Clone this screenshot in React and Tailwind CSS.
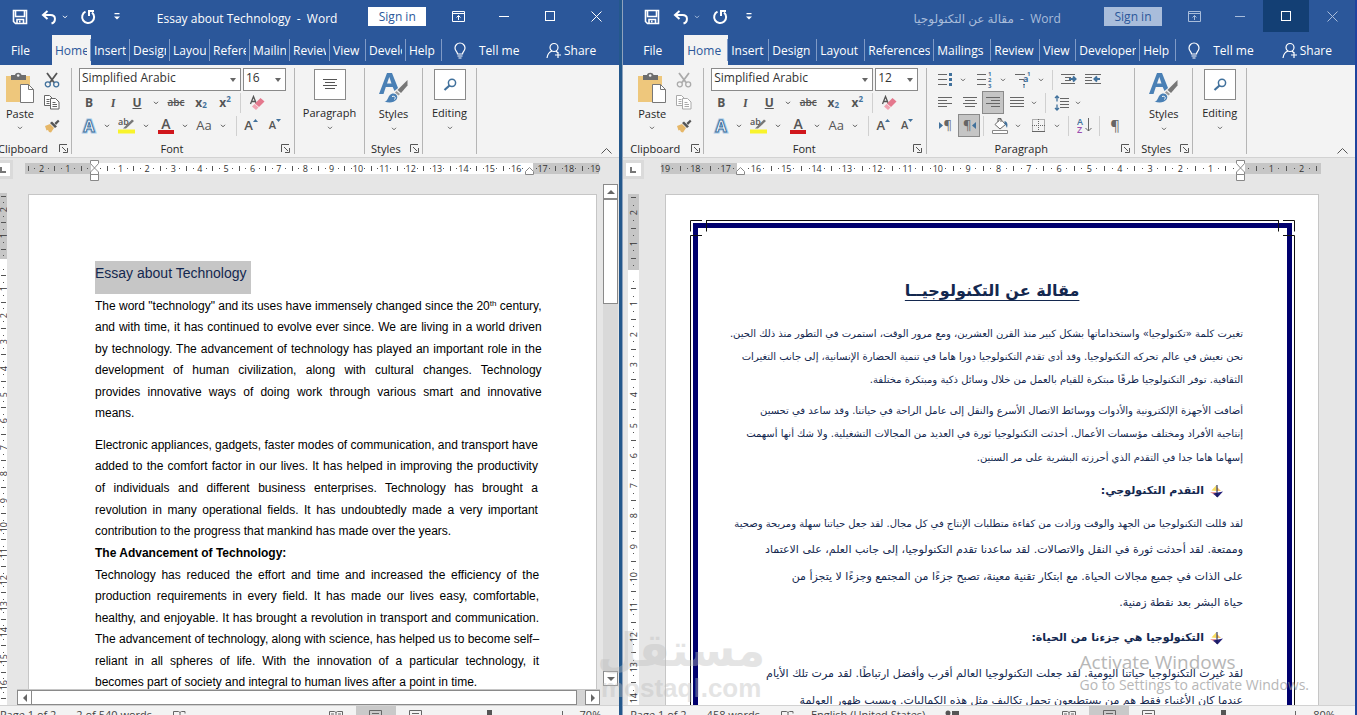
import { useState } from "react";

const LEFT_TABS = [
  { name: "Home", width: "w-[39px]" },
  { name: "Insert", width: "w-[39px]" },
  { name: "Design", width: "w-[40px]" },
  { name: "Layout", width: "w-[40px]" },
  { name: "References", width: "w-[40px]" },
  { name: "Mailings", width: "w-[40px]" },
  { name: "Review", width: "w-[40px]" },
  { name: "View", width: "w-[36px]" },
  { name: "Developer", width: "w-[40px]" },
  { name: "Help", width: "w-[36px]" },
];

const RIGHT_TABS = [
  { name: "Home", width: "w-[44px]" },
  { name: "Insert", width: "w-[41px]" },
  { name: "Design", width: "w-[48px]" },
  { name: "Layout", width: "w-[48px]" },
  { name: "References", width: "w-[69px]" },
  { name: "Mailings", width: "w-[57px]" },
  { name: "Review", width: "w-[49px]" },
  { name: "View", width: "w-[36px]" },
  { name: "Developer", width: "w-[64px]" },
  { name: "Help", width: "w-[36px]" },
];

/* ---------- small icons ---------- */

function Chevron() {
  return (
    <svg width="6" height="4" viewBox="0 0 6 4" fill="none" stroke="currentColor">
      <path d="M1 .8 3 2.800 5 .8" />
    </svg>
  );
}

function Launcher() {
  return (
    <button aria-label="More options" className="text-[#555]">
      <svg width="9" height="9" viewBox="0 0 9 9" fill="none" stroke="currentColor">
        <path d="M.5 8V.5H8M3 3l4 4M8.500 4v4.500H4" />
      </svg>
    </button>
  );
}

function SaveIcon() {
  return (
    <svg width="16" height="16" viewBox="0 0 16 16" fill="none" stroke="currentColor" strokeWidth="1.600">
      <path d="M1.500 1.500h13v13h-11l-2-2z" />
      <path d="M3.500 1.500v6h9v-6M5 14.500v-4h6.500v4" />
      <path d="M7 11.500h1.500v2H7z" fill="currentColor" stroke="none" />
    </svg>
  );
}

function UndoIcon() {
  return (
    <svg width="16" height="15" viewBox="0 0 16 15" fill="none" stroke="currentColor" strokeWidth="2">
      <path d="M6.500 1 2 5l4.500 4M2 5h7.500c6 0 5.500 7 1 8.500" />
    </svg>
  );
}

function RedoIcon() {
  return (
    <svg width="16" height="16" viewBox="0 0 16 16" fill="none" stroke="currentColor" strokeWidth="2">
      <path d="M5.500 2.600a6 6 0 1 0 6.500.8" />
      <path d="M9 7V2h5" />
    </svg>
  );
}

function PasteIcon() {
  return (
    <svg width="30" height="32" viewBox="0 0 30 32">
      <path d="M1 4h24v26H1z" fill="#eec77c" />
      <path d="M6 3h4c.5-3 6-3 6.500 0H21v5H6z" fill="#6d6d6d" />
      <circle cx="13.200" cy="3.500" r="1.300" fill="#f3f3f3" />
      <path d="M15.500 12.500h8l5 5v13h-13z" fill="#fff" stroke="#777" />
      <path d="M23.500 12.500v5h5" fill="none" stroke="#777" />
    </svg>
  );
}

function CutIcon({ dim }) {
  const blade = dim ? "#aaa" : "#555";
  const ring = dim ? "#aaa" : "#41719c";
  return (
    <svg width="16" height="16" viewBox="0 0 16 16" fill="none" strokeWidth="1.800">
      <path d="M3 1l7 9.500M13 1 6 10.500" stroke={blade} />
      <circle cx="3.800" cy="12.300" r="2.500" stroke={ring} strokeWidth="1.300" />
      <circle cx="12.200" cy="12.300" r="2.500" stroke={ring} strokeWidth="1.300" />
    </svg>
  );
}

function CopyIcon({ dim }) {
  const color = dim ? "#aaa" : "#666";
  return (
    <svg width="16" height="15" viewBox="0 0 16 15" stroke={color}>
      <path d="M.5.500h5l3 3v7h-8z" fill="#fff" />
      <path d="M2.500 4.500h3M2.500 6.500h3M2.500 8.500h3" />
      <path d="M6.500 3.500h5l3.500 3.500v7H6.500z" fill="#fff" />
      <path d="M8.500 7.500h3M8.500 9.500h4.500M8.500 11.500h4.500" />
    </svg>
  );
}

function BrushIcon() {
  return (
    <svg width="16" height="14" viewBox="0 0 16 14">
      <path d="M1 7l5-2 4 4-3 4.500-2-.5-1-2-1.500.5z" fill="#e6b768" />
      <path d="M6 4l2-1.500 5 5L11 9z" fill="#555" />
      <path d="M10.500 4 14 .8l1.500 1.500L12 6z" fill="#555" />
    </svg>
  );
}

function EraserIcon() {
  return (
    <svg width="16" height="16" viewBox="0 0 16 16">
      <path d="M1.500 9 4.500 1.500 7.500 9M2.500 6.500h4" stroke="#555" strokeWidth="1.300" fill="none" />
      <path d="M6 8.500 11.500 3 15.500 6.500 10 12z" fill="#e4788d" />
      <path d="M3 11.500 5.500 9 9.500 12.500 7 15z" fill="#f2a3b2" />
    </svg>
  );
}

function TextEffectsIcon() {
  return (
    <svg width="18" height="18" viewBox="0 0 18 18" fontFamily="Open Sans" fontSize="16" fontWeight="700" textAnchor="middle">
      <text x="9" y="15" fill="#9cc3e6" stroke="#a9cbe9" strokeWidth="3">A</text>
      <text x="9" y="15" fill="#fff" stroke="#41719c" strokeWidth="1">A</text>
    </svg>
  );
}

function HighlightIcon() {
  return (
    <svg width="17" height="17" viewBox="0 0 17 17">
      <text x="0" y="8" fontSize="9" fontFamily="Open Sans" fontWeight="600" fill="#555">ab</text>
      <path d="M5 11.500 14 2.500l2 1.500-8 7.500z" fill="#777" />
      <path d="M0 12.500h17v4H0z" fill="#f8f32b" />
    </svg>
  );
}

function StylesIcon() {
  return (
    <svg width="30" height="31" viewBox="0 0 30 31">
      <path d="M0 22 8 1h5l6 15-3.500 3-1.800-4H6.800L4.500 22zM8 11.500h4.500L10.300 5z" fill="#4a80b5" fillRule="evenodd" />
      <path d="M28.500 8v5.500L22 21l-3.500-3z" fill="#777" />
      <path d="M17.500 19l3.500 3-1.500 1.500-3.500-3z" fill="#999" />
      <path d="M5.500 29.500c4 0 3-7 8-8 4-.5 6 3 4 6-2.500 3.500-8 3.500-12 2z" fill="#4a80b5" />
      <path d="M13 24.500c3-1 4 1 2.500 3" stroke="#fff" fill="none" />
    </svg>
  );
}

function LinesIcon({ lines, className }) {
  return (
    <svg width="16" height="13" viewBox="0 0 16 13" stroke="currentColor" className={className}>
      {lines.map(([x1, x2], i) => (
        <path key={i} d={`M${x1} ${i * 3 + 1.5}H${x2}`} />
      ))}
    </svg>
  );
}

function ListIcon({ kind }) {
  return (
    <svg width="17" height="17" viewBox="0 0 17 17">
      {kind === "multi" ? (
        <path d="M1 3.500h10M5 8.500h5M9 13.500h2" stroke="#666" />
      ) : (
        <path d="M1 3.500h9M1 8.500h9M1 13.500h9" stroke="#666" />
      )}
      {kind === "bullet" && <path d="M12 2h3v3h-3zM12 7h3v3h-3zM12 12h3v3h-3z" fill="#41719c" />}
      {kind === "number" && (
        <g fontSize="6" fontFamily="Open Sans" fontWeight="700" fill="#41719c">
          <text x="12" y="5">1</text>
          <text x="12" y="11">2</text>
          <text x="12" y="17">3</text>
        </g>
      )}
      {kind === "multi" && (
        <g fontSize="9" fontFamily="Open Sans" fontWeight="700" fill="#41719c">
          <text x="13" y="5" fontSize="6">1</text>
          <text x="9" y="11">a</text>
          <text x="9" y="17" fontSize="6">i</text>
        </g>
      )}
    </svg>
  );
}

function IndentIcon({ out }) {
  return (
    <svg width="17" height="13" viewBox="0 0 17 13" fill="none">
      <path d={out ? "M1 1.500h16M1 4.500h7M1 7.500h7M1 10.500h16" : "M1 1.500h14M5 4.500h6M5 7.500h6M1 10.500h14"} stroke="#666" />
      <path d={out ? "M16 6h-5M13 3.500 10.500 6 13 8.500" : "M9 6h6M13 3.500 15.500 6 13 8.500"} stroke="#41719c" strokeWidth="2" />
    </svg>
  );
}

function SpacingIcon() {
  return (
    <svg width="15" height="16" viewBox="0 0 15 16" fill="none">
      <path d="M6 3.500h9M6 6.500h9M6 9.500h9M6 12.500h9" stroke="#666" />
      <path d="M3 1v5.500M1 3l2-2 2 2M3 9.500V15M1 13l2 2 2-2" stroke="#41719c" strokeWidth="1.300" />
    </svg>
  );
}

function BucketIcon() {
  return (
    <svg width="17" height="17" viewBox="0 0 17 17">
      <path d="M3 7.500 8.500 2l5 5.500L8 12z" fill="#fff" stroke="#666" />
      <path d="M6 5V1.500h3V5" fill="none" stroke="#666" />
      <path d="M12.500 4c4 1 3 5 2.500 7-1-2-1-3-2.500-4z" fill="#41719c" />
      <path d="M.5 13.500h15v3H.5z" fill="#fff" stroke="#888" />
    </svg>
  );
}

function BordersIcon() {
  return (
    <svg width="13" height="13" viewBox="0 0 13 13" fill="none" stroke="#666" strokeDasharray="1 1">
      <path d="M.5.500h12v12H.5zM6.500 0v13M0 6.500h13" />
      <path d="M0 12.500h13" strokeDasharray="none" />
    </svg>
  );
}

function SortIcon() {
  return (
    <svg width="15" height="17" viewBox="0 0 15 17">
      <text x="0" y="8" fontSize="9" fontFamily="Open Sans" fontWeight="600" fill="#41719c">A</text>
      <text x="0" y="16" fontSize="9" fontFamily="Open Sans" fontWeight="600" fill="#9b4fb0">Z</text>
      <path d="M11.500 1v13M8.500 11l3 3 3-3" fill="none" stroke="#666" />
    </svg>
  );
}

function BulbIcon() {
  return (
    <svg width="12" height="17" viewBox="0 0 12 17" fill="none" stroke="currentColor" strokeWidth="1.200">
      <path d="M3.500 12c0-2.500-2.500-3-2.500-6a5 5 0 0 1 10 0c0 3-2.500 3.500-2.500 6zM3.500 14h5M4.500 16h3" />
    </svg>
  );
}

function PersonIcon() {
  return (
    <svg width="16" height="17" viewBox="0 0 16 17" fill="none" stroke="currentColor" strokeWidth="1.200">
      <circle cx="8" cy="5.500" r="4" />
      <path d="M1 16c.5-4 2-6 5-7M10 9l1.500 1.500M9 13h6M12 10v6" />
    </svg>
  );
}

/* ---------- title bar and tabs ---------- */

function TitleBar({ title, titleClass, barClass, inactive }) {
  const dim = inactive ? "text-[#a9bddb]" : "text-white";
  return (
    <header className="flex h-[35px] shrink-0 items-start">
      <div className={`flex h-[34px] items-center text-white ${barClass}`}>
        <button aria-label="Save" className="flex w-[24px] justify-center"><SaveIcon /></button>
        <button aria-label="Undo" className="ml-[4px] flex w-[26px] justify-center"><UndoIcon /></button>
        <button aria-label="Undo list" className={dim}><Chevron /></button>
        <button aria-label="Repeat" className="ml-[10px] flex w-[20px] justify-center"><RedoIcon /></button>
        <button aria-label="Customize Quick Access Toolbar" className="ml-[16px]">
          <svg width="6" height="8" viewBox="0 0 6 8" fill="currentColor">
            <path d="M.5 0h5v1.200h-5zM0 3.500h6l-3 3z" />
          </svg>
        </button>
      </div>
      <h1 className={`min-w-0 flex-1 truncate text-center text-[12px] leading-[38px] ${titleClass} ${dim}`}>{title}</h1>
      <button className={`mt-[7px] h-[19px] w-[58px] text-[12px] leading-[18px] ${inactive ? "bg-[#a9bddb] text-[#2b579a]" : "bg-white text-[#2b579a]"}`}>
        Sign in
      </button>
      <button aria-label="Ribbon display options" className={`ml-[9px] flex h-[32px] w-[46px] items-center justify-center ${dim}`}>
        <svg width="13" height="11" viewBox="0 0 13 11" fill="none" stroke="currentColor">
          <path d="M.5.500h12v10H.5zM.5 2.500h12M6.500 9V4.500M4.500 6.500l2-2 2 2" />
        </svg>
      </button>
      <button aria-label="Minimize" className={`flex h-[32px] w-[46px] items-center justify-center ${dim}`}>
        <span className="h-px w-[10px] bg-current" />
      </button>
      <button aria-label="Maximize" className={`flex h-[32px] w-[46px] items-center justify-center text-white ${inactive ? "bg-[#133f74]" : ""}`}>
        <span className="size-[10px] border border-current" />
      </button>
      <button aria-label="Close" className={`flex h-[32px] w-[46px] items-center justify-center ${dim}`}>
        <svg width="11" height="11" viewBox="0 0 11 11" stroke="currentColor">
          <path d="M.5.500l10 10M10.500.500l-10 10" />
        </svg>
      </button>
    </header>
  );
}

function TabStrip({ tabs, fileClass }) {
  const [active, setActive] = useState("Home");
  return (
    <nav className="flex h-[30px] shrink-0 text-[12px] leading-[29px] text-white">
      <button className={`shrink-0 text-left ${fileClass}`}>File</button>
      {tabs.map((tab) => (
        <button
          key={tab.name}
          onClick={() => setActive(tab.name)}
          className={`flex shrink-0 items-center ${tab.width} ${active === tab.name ? "bg-[#f3f3f3] text-[#2b579a]" : ""}`}
        >
          <span className="mx-[3px] min-w-0 flex-1 overflow-hidden text-left whitespace-nowrap">{tab.name}</span>
          <span className="h-[22px] w-px bg-[#7f9ac6]" />
        </button>
      ))}
      <button className="ml-[12px] flex shrink-0 items-center">
        <BulbIcon />
        <span className="ml-[13px]">Tell me</span>
      </button>
      <button className="mr-[23px] ml-auto flex shrink-0 items-center gap-[2px]">
        <PersonIcon />
        <span>Share</span>
      </button>
    </nav>
  );
}

/* ---------- ribbon ---------- */

function Tool({ label, className, selected, children }) {
  return (
    <button
      aria-label={label}
      className={`flex h-[23px] shrink-0 items-center justify-center ${className} ${selected ? "border border-[#8a8a8a] bg-[#c5c5c5]" : ""}`}
    >
      {children}
    </button>
  );
}

function Divider({ className }) {
  return <span className={`h-[20px] w-px shrink-0 bg-[#d0d0d0] ${className}`} />;
}

function GroupLabel({ children, className }) {
  return (
    <div className="mt-auto flex h-[11px] items-center pr-[4px] text-[11px] leading-[11px] text-[#262626]">
      <span className={`flex-1 text-center whitespace-nowrap ${className}`}>{children}</span>
      <Launcher />
    </div>
  );
}

function Group({ className, children }) {
  return <section className={`flex h-[86px] shrink-0 flex-col border-r border-[#b5b5b5] ${className}`}>{children}</section>;
}

function ClipboardGroup({ className, dim }) {
  return (
    <Group className={className}>
      <div className="flex justify-end">
        <button className="mt-[4px] flex w-[40px] flex-col items-center text-[11px]">
          <PasteIcon />
          <span className="mt-[2px] leading-[16px]">Paste</span>
          <span className="mt-[4px] text-[#666]"><Chevron /></span>
        </button>
        <div className="mr-[7px] flex w-[24px] flex-col">
          <Tool label="Cut" className="w-full"><CutIcon dim={dim} /></Tool>
          <Tool label="Copy" className="w-full"><CopyIcon dim={dim} /></Tool>
          <Tool label="Format painter" className="w-full"><BrushIcon /></Tool>
        </div>
      </div>
      <div className="mt-auto flex h-[11px] items-center justify-end gap-[11px] pr-[3px] text-[11px] leading-[11px]">
        <span>Clipboard</span>
        <Launcher />
      </div>
    </Group>
  );
}

function Combo({ label, value, options, className }) {
  return (
    <label className={`relative block h-[23px] border border-[#8a8a8a] bg-white ${className}`}>
      <select aria-label={label} defaultValue={value} className="block h-[18px] w-full appearance-none pl-[2px] text-[12px] leading-[18px] text-[#333] outline-none">
        {options.map((option) => (
          <option key={option}>{option}</option>
        ))}
      </select>
      <svg width="6" height="4" viewBox="0 0 6 4" className="pointer-events-none absolute top-[9px] right-[4px]" fill="#666">
        <path d="M0 0h6L3 4z" />
      </svg>
    </label>
  );
}

function FontGroup({ size }) {
  return (
    <Group className="w-[223px] pl-[5px] text-[#555]">
      <div className="ml-[2px] flex gap-[2px]">
        <Combo label="Font" value="Simplified Arabic" options={["Simplified Arabic", "Arial"]} className="w-[162px]" />
        <Combo label="Font size" value={size} options={["12", "16"]} className="w-[43px]" />
      </div>
      <div className="flex items-center text-[12px]">
        <Tool label="Bold" className="w-[24px] font-bold">B</Tool>
        <Tool label="Italic" className="w-[24px] font-serif font-bold italic">I</Tool>
        <Tool label="Underline" className="w-[24px] font-bold underline">U</Tool>
        <Tool label="Underline style" className="w-[14px]"><Chevron /></Tool>
        <Tool label="Strikethrough" className="w-[26px] text-[10px] font-semibold line-through">abc</Tool>
        <Tool label="Subscript" className="w-[24px] font-bold">x<sub className="text-[8px] text-[#41719c]">2</sub></Tool>
        <Tool label="Superscript" className="w-[24px] font-bold">x<sup className="text-[8px] text-[#41719c]">2</sup></Tool>
        <Divider className="mx-[3px]" />
        <Tool label="Clear formatting" className="w-[26px]"><EraserIcon /></Tool>
      </div>
      <div className="flex items-center text-[13px]">
        <Tool label="Text effects" className="w-[24px]"><TextEffectsIcon /></Tool>
        <Tool label="Effects list" className="w-[11px]"><Chevron /></Tool>
        <Tool label="Highlight" className="w-[28px]"><HighlightIcon /></Tool>
        <Tool label="Highlight colors" className="w-[12px]"><Chevron /></Tool>
        <Tool label="Font color" className="w-[28px]">
          <span className="flex w-[16px] flex-col items-center border-b-4 border-[#d0161c] text-[14px] leading-[13px] font-semibold">A</span>
        </Tool>
        <Tool label="Font colors" className="w-[10px]"><Chevron /></Tool>
        <Tool label="Change case" className="w-[28px]">Aa</Tool>
        <Tool label="Case list" className="w-[10px]"><Chevron /></Tool>
        <Divider className="mr-[2px] ml-[8px]" />
        <Tool label="Grow font" className="w-[24px] font-semibold">
          A<svg width="5" height="3" viewBox="0 0 5 3" className="mb-[10px]" fill="#41719c"><path d="M0 3h5L2.500 0z" /></svg>
        </Tool>
        <Tool label="Shrink font" className="w-[24px] text-[11px] font-semibold">
          A<svg width="5" height="3" viewBox="0 0 5 3" className="mb-[10px]" fill="#41719c"><path d="M0 0h5L2.500 3z" /></svg>
        </Tool>
      </div>
      <GroupLabel className="mr-[14px]">Font</GroupLabel>
    </Group>
  );
}

function CollapsedGroup({ name, className, children }) {
  return (
    <Group className={className}>
      <button className="mt-[1px] flex flex-col items-center text-[11px]">
        <span className="flex h-[31px] w-[32px] items-center justify-center border border-[#8a8a8a] bg-white text-[#555]">{children}</span>
        <span className="mt-[4px] leading-[18px]">{name}</span>
        <span className="mt-[4px] text-[#666]"><Chevron /></span>
      </button>
    </Group>
  );
}

function EditingGroup() {
  return (
    <CollapsedGroup name="Editing" className="w-[54px]">
      <svg width="14" height="13" viewBox="0 0 14 13" fill="none" stroke="#41719c">
        <circle cx="9" cy="4.800" r="3.600" strokeWidth="1.500" />
        <path d="M6.500 7.500 1.500 12" strokeWidth="2.200" />
      </svg>
    </CollapsedGroup>
  );
}

function StylesGroup() {
  return (
    <Group className="w-[58px]">
      <button className="mt-[4px] flex flex-col items-center text-[11px]">
        <StylesIcon />
        <span className="mt-[3px] leading-[16px]">Styles</span>
        <span className="mt-[5px] text-[#666]"><Chevron /></span>
      </button>
      <div className="mt-auto flex h-[11px] items-center justify-between pr-[3px] pl-[6px] text-[11px] leading-[11px]">
        <span>Styles</span>
        <Launcher />
      </div>
    </Group>
  );
}

const FULL = [[1, 15], [1, 15], [1, 15], [1, 15]];

function ParagraphGroup() {
  return (
    <Group className="w-[208px] pl-[6px] text-[#666]">
      <div className="flex h-[23px] items-center">
        <Tool label="Bullets" className="w-[24px]"><ListIcon kind="bullet" /></Tool>
        <Tool label="Bullet styles" className="w-[12px]"><Chevron /></Tool>
        <Tool label="Numbering" className="w-[30px]"><ListIcon kind="number" /></Tool>
        <Tool label="Number styles" className="w-[8px]"><Chevron /></Tool>
        <Tool label="Multilevel list" className="w-[30px]"><ListIcon kind="multi" /></Tool>
        <Tool label="List styles" className="w-[8px]"><Chevron /></Tool>
        <Divider className="mr-[3px] ml-[7px]" />
        <Tool label="Increase indent" className="w-[24px]"><IndentIcon /></Tool>
        <Tool label="Decrease indent" className="w-[24px]"><IndentIcon out /></Tool>
      </div>
      <div className="flex items-center">
        <Tool label="Align left" className="w-[24px]"><LinesIcon lines={[[1, 15], [1, 10], [1, 15], [1, 10]]} /></Tool>
        <Tool label="Center" className="w-[25px]"><LinesIcon lines={[[1, 15], [3, 13], [1, 15], [3, 13]]} /></Tool>
        <Tool label="Align right" className="w-[22px]" selected><LinesIcon lines={[[1, 15], [6, 15], [1, 15], [6, 15]]} /></Tool>
        <Tool label="Justify" className="w-[26px]"><LinesIcon lines={FULL} /></Tool>
        <Tool label="Justify list" className="w-[8px]"><Chevron /></Tool>
        <Divider className="mr-[3px] ml-[7px]" />
        <Tool label="Line spacing" className="w-[24px]"><SpacingIcon /></Tool>
        <Tool label="Spacing list" className="w-[9px]"><Chevron /></Tool>
      </div>
      <div className="flex items-center text-[15px]">
        <Tool label="Left to right" className="w-[25px] text-[13px]">
          <svg width="4" height="7" viewBox="0 0 4 7" fill="#41719c"><path d="M0 0v7l4-3.500z" /></svg>¶
        </Tool>
        <Tool label="Right to left" className="w-[22px] text-[13px]" selected>
          ¶<svg width="4" height="7" viewBox="0 0 4 7" fill="#41719c"><path d="M4 0v7L0 3.500z" /></svg>
        </Tool>
        <Divider className="mr-[3px] ml-[3px]" />
        <Tool label="Shading" className="w-[26px]"><BucketIcon /></Tool>
        <Tool label="Shading colors" className="w-[9px]"><Chevron /></Tool>
        <Tool label="Borders" className="w-[32px]"><BordersIcon /></Tool>
        <Tool label="Border styles" className="w-[6px]"><Chevron /></Tool>
        <Divider className="mr-[3px] ml-[8px]" />
        <Tool label="Sort" className="w-[24px]"><SortIcon /></Tool>
        <Divider className="mr-[3px] ml-[3px]" />
        <Tool label="Show marks" className="w-[24px]">¶</Tool>
      </div>
      <GroupLabel className="mr-[12px]">Paragraph</GroupLabel>
    </Group>
  );
}

function Ribbon({ children }) {
  return (
    <div className="flex h-[93px] shrink-0 overflow-hidden border-b border-[#d2d2d2] bg-[#f3f3f3] pt-[3px] text-[#262626]">
      {children}
      <button aria-label="Collapse the ribbon" className="mt-auto mr-[7px] mb-[3px] ml-auto">
        <svg width="11" height="6" viewBox="0 0 11 6" fill="none" stroke="#555"><path d="M.5 5.500l5-5 5 5" /></svg>
      </button>
    </div>
  );
}

/* ---------- rulers ---------- */

// One mark per quarter of a centimetre, from -2.5 up to the given end.
function rulerMarks(end) {
  const marks = [];
  for (let q = -10; q <= end * 4; q++) marks.push(q);
  return marks;
}

function markColor(q, limit) {
  return q < 0 || q > limit * 4 ? "bg-[#c6c6c6]" : "bg-white";
}

function MarkFace({ q, vertical }) {
  if (q === 0) return null;
  if (q % 4 === 0) return <span className={`relative z-10 ${vertical ? "rotate-180 [writing-mode:vertical-rl]" : ""}`}>{Math.abs(q) / 4}</span>;
  if (q % 2 === 0) return <span className={vertical ? "h-px w-[5px] bg-[#555]" : "h-[5px] w-px bg-[#555]"} />;
  return <span className="size-px bg-[#555]" />;
}

function Ruler({ reversed, className }) {
  const marks = rulerMarks(19);
  if (reversed) marks.reverse();
  return (
    <div className={`flex h-[11px] flex-1 text-[9px] leading-[11px] text-[#333] ${className}`}>
      {marks.map((q) => (
        <span key={q} className={`relative flex min-w-0 flex-1 items-center justify-center ${markColor(q, 16.5)}`}>
          {q !== 66 && <MarkFace q={q} />}
          {q === 0 && (
            <svg width="9" height="22" viewBox="0 0 9 22" className="absolute -top-[3px] z-10" fill="#fff" stroke="#888">
              <path d="M.5.500h8v3L4.500 8 .5 3.500zM.5 14.500v-2.500l4-4 4 4v2.500zM.5 14.500h8v6h-8z" />
            </svg>
          )}
          {q === 66 && (
            <svg width="9" height="8" viewBox="0 0 9 8" className="absolute top-[4px] z-10" fill="#fff" stroke="#888">
              <path d="M.5 7.500V4.500l4-4 4 4v3z" />
            </svg>
          )}
        </span>
      ))}
    </div>
  );
}

function VerticalRuler({ end, className }) {
  return (
    <div className={`shrink-0 overflow-hidden text-[9px] leading-[11px] text-[#333] ${className}`}>
      <div className="flex h-[515px] flex-col">
        {rulerMarks(end).map((q) => (
          <span key={q} className={`flex min-h-0 flex-1 items-center justify-center ${markColor(q, 99)}`}>
            <MarkFace q={q} vertical />
          </span>
        ))}
      </div>
    </div>
  );
}

function TabSelector({ className }) {
  return (
    <button aria-label="Tab selector" className={`flex h-[19px] shrink-0 items-center border-[#dadada] bg-white text-[#777] ${className}`}>
      <svg width="6" height="6" viewBox="0 0 6 6" fill="none" stroke="currentColor" strokeWidth="2"><path d="M1 0v5h5" /></svg>
    </button>
  );
}

/* ---------- documents ---------- */

// Every line keeps its own break; all but the last one are spread to the full measure.
function EnglishParagraph({ lines, className }) {
  return (
    <p className={`grid auto-rows-fr items-center text-[12px] ${className}`}>
      {lines.map((line, i) => (
        <span key={i} className={`block leading-[20px] whitespace-nowrap ${i < lines.length - 1 ? "[text-align-last:justify]" : ""}`}>{line}</span>
      ))}
    </p>
  );
}

function EnglishPage() {
  return (
    <article className="mt-[10px] mr-[3px] ml-[21px] min-h-0 flex-1 overflow-hidden border border-b-0 border-[#c6c6c6] bg-white px-[66px] pt-[66px] font-['Liberation_Sans',Arial,sans-serif] text-black">
      <h2 className="h-[33px] w-[156px] bg-[#c6c6c6] text-[14px] leading-[25px] whitespace-nowrap text-[#14284f]">Essay about Technology</h2>
      <EnglishParagraph
        className="mt-[1px] h-[129px]"
        lines={[
          <>The word "technology" and its uses have immensely changed since the 20<sup className="text-[8px]">th</sup> century,</>,
          "and with time, it has continued to evolve ever since. We are living in a world driven",
          "by technology. The advancement of technology has played an important role in the",
          "development of human civilization, along with cultural changes. Technology",
          "provides innovative ways of doing work through various smart and innovative",
          "means.",
        ]}
      />
      <EnglishParagraph
        className="mt-[10px] h-[108px]"
        lines={[
          "Electronic appliances, gadgets, faster modes of communication, and transport have",
          "added to the comfort factor in our lives. It has helped in improving the productivity",
          "of individuals and different business enterprises. Technology has brought a",
          "revolution in many operational fields. It has undoubtedly made a very important",
          "contribution to the progress that mankind has made over the years.",
        ]}
      />
      <h3 className="text-[12px] leading-[22px] font-bold">The Advancement of Technology:</h3>
      <EnglishParagraph
        className="h-[129px]"
        lines={[
          "Technology has reduced the effort and time and increased the efficiency of the",
          "production requirements in every field. It has made our lives easy, comfortable,",
          "healthy, and enjoyable. It has brought a revolution in transport and communication.",
          "The advancement of technology, along with science, has helped us to become self–",
          "reliant in all spheres of life. With the innovation of a particular technology, it",
          "becomes part of society and integral to human lives after a point in time.",
        ]}
      />
    </article>
  );
}

function ArabicParagraph({ lines, className }) {
  return (
    <p className={`grid auto-rows-fr items-center ${className}`}>
      {lines.map((line, i) => (
        <span key={i} className="block leading-[20px] whitespace-nowrap">{line}</span>
      ))}
    </p>
  );
}

function ArabicHeading({ children, className }) {
  return (
    <h3 className={`flex h-[24px] items-center gap-[6px] pr-[20px] text-[11px] font-bold ${className}`}>
      <svg width="13" height="13" viewBox="0 0 13 13">
        <path d="M1.500 5.500 6.500 0v6z" fill="#f9dc5c" />
        <path d="M0 7h6v4z" fill="#ea9a9a" />
        <path d="M7 2l4 4H7z" fill="#f6c36b" />
        <path d="M3 8.500 13 6.500 7.500 12.500z" fill="#24207a" />
        <path d="M7 0v12" stroke="#111a4a" />
      </svg>
      {children}
    </h3>
  );
}

function FrameCorner({ className }) {
  return (
    <svg width="17" height="17" viewBox="0 0 17 17" fill="none" stroke="#111" className={`absolute top-0 ${className}`}>
      <path d="M.5 11.500V.500H12M.5 17v-1.500H12M16.500 11.500V.500" />
    </svg>
  );
}

function ArabicPage() {
  return (
    <article className="mt-[10px] mr-[36px] ml-[26px] min-h-0 flex-1 overflow-hidden border border-b-0 border-[#c6c6c6] bg-white pt-[25px] pr-[23px] pl-[24px]">
      <div className="relative px-[3px] pt-[3px]">
        <FrameCorner className="left-0" />
        <FrameCorner className="right-0 -scale-x-100" />
        <span className="absolute inset-x-[16px] top-0 h-px bg-[#111]" />
        <span className="absolute top-[16px] bottom-0 left-0 w-px bg-[#111]" />
        <span className="absolute top-[16px] right-0 bottom-0 w-px bg-[#111]" />
        <div dir="rtl" className="h-[600px] border-x-[5px] border-t-[5px] border-[#00006e] pt-[47px] pr-[44px] font-['DejaVu_Sans',sans-serif] text-[#14284f]">
          <h2 className="ml-[43px] text-center text-[16px] leading-[32px] font-bold whitespace-nowrap underline underline-offset-4">مقالة عن التكنولوجيــا</h2>
          <ArabicParagraph
            className="mt-[15px] h-[70px] text-[10px]"
            lines={[
              "تغيرت كلمة «تكنولوجيا» واستخداماتها بشكل كبير منذ القرن العشرين، ومع مرور الوقت، استمرت في التطور منذ ذلك الحين.",
              "نحن نعيش في عالم تحركه التكنولوجيا. وقد أدى تقدم التكنولوجيا دورا هاما في تنمية الحضارة الإنسانية، إلى جانب التغيرات",
              "الثقافية. توفر التكنولوجيا طرقًا مبتكرة للقيام بالعمل من خلال وسائل ذكية ومبتكرة مختلفة.",
            ]}
          />
          <ArabicParagraph
            className="mt-[7px] h-[71px] text-[10px]"
            lines={[
              "أضافت الأجهزة الإلكترونية والأدوات ووسائط الاتصال الأسرع والنقل إلى عامل الراحة في حياتنا. وقد ساعد في تحسين",
              "إنتاجية الأفراد ومختلف مؤسسات الأعمال. أحدثت التكنولوجيا ثورة في العديد من المجالات التشغيلية. ولا شك أنها أسهمت",
              "إسهاما هاما جدا في التقدم الذي أحرزته البشرية على مر السنين.",
            ]}
          />
          <ArabicHeading className="mt-[9px]">التقدم التكنولوجي:</ArabicHeading>
          <ArabicParagraph
            className="mt-[8px] h-[105px] text-[11px]"
            lines={[
              <span className="text-[10px]">لقد قللت التكنولوجيا من الجهد والوقت وزادت من كفاءة متطلبات الإنتاج في كل مجال. لقد جعل حياتنا سهلة ومريحة وصحية</span>,
              "وممتعة. لقد أحدثت ثورة في النقل والاتصالات. لقد ساعدنا تقدم التكنولوجيا، إلى جانب العلم، على الاعتماد",
              "على الذات في جميع مجالات الحياة. مع ابتكار تقنية معينة، تصبح جزءًا من المجتمع وجزءًا لا يتجزأ من",
              "حياة البشر بعد نقطة زمنية.",
            ]}
          />
          <ArabicHeading className="mt-[10px]">التكنولوجيا هي جزءنا من الحياة:</ArabicHeading>
          <ArabicParagraph
            className="mt-[10px] h-[54px] text-[11px]"
            lines={[
              "لقد غيرت التكنولوجيا حياتنا اليومية. لقد جعلت التكنولوجيا العالم أقرب وأفضل ارتباطًا. لقد مرت تلك الأيام",
              "عندما كان الأغنياء فقط هم من يستطيعون تحمل تكاليف مثل هذه الكماليات. وبسبب ظهور العولمة",
            ]}
          />
        </div>
      </div>
    </article>
  );
}

/* ---------- scroll bars and status bar ---------- */

function ScrollButton({ label, path }) {
  return (
    <button aria-label={label} className="flex size-[15px] shrink-0 items-center justify-center border border-[#8a8a8a] bg-white">
      <svg width="8" height="8" viewBox="0 0 8 8" fill="#666"><path d={path} /></svg>
    </button>
  );
}

function BookIcon() {
  return (
    <svg width="14" height="12" viewBox="0 0 14 12" fill="none" stroke="#666">
      <path d="M.5 1.500h5l1.500 1 1.500-1h5v9H.5zM7 2.500v8M2 4h3M2 6h3M9 4h3M9 6h3" />
    </svg>
  );
}

function ProofIcon() {
  return (
    <svg width="14" height="12" viewBox="0 0 14 12" fill="none" stroke="#666">
      <path d="M7 2.500v8l-1.500-1h-5v-8h5zM7 2.500l1.500-1h3.500v2M8.500 5l5 5M13.500 5l-5 5" />
    </svg>
  );
}

function PageIcon() {
  return (
    <svg width="13" height="12" viewBox="0 0 13 12" fill="none" stroke="#666">
      <path d="M.5.500h12v11H.5zM3 3.500h7M3 5.500h7M3 7.500h7" />
    </svg>
  );
}

function StatusBar({ page, words, language, zoom, pageClass, wordsClass, viewsClass }) {
  return (
    <footer className="h-[10px] shrink-0 overflow-hidden border-t border-[#d2d2d2] bg-[#f3f3f3] text-[11px] text-[#444]">
      <div className="flex h-[19px] items-center whitespace-nowrap">
        <span className={pageClass}>{page}</span>
        <span className={wordsClass}>{words}</span>
        <span className="ml-[21px]"><ProofIcon /></span>
        {language && <span className="ml-[16px]">{language}</span>}
        {language && (
          <svg width="14" height="12" viewBox="0 0 14 12" className="ml-[20px]" fill="#555">
            <circle cx="3" cy="3" r="2.500" /><path d="M7 1h7v4H7zM1 7h8v4H1z" />
          </svg>
        )}
        <div className={`ml-auto flex h-full items-center ${viewsClass}`}>
          <button aria-label="Read mode"><BookIcon /></button>
          <button aria-label="Print layout" className="ml-[13px] flex h-full w-[40px] items-center justify-center bg-[#c9c9c9]"><PageIcon /></button>
          <button aria-label="Web layout" className="ml-[13px]"><PageIcon /></button>
          <input
            type="range"
            aria-label="Zoom"
            defaultValue="41"
            className="ml-[24px] h-[11px] w-[106px] appearance-none bg-[linear-gradient(#aaa,#aaa)] bg-[length:100%_1px] bg-center bg-no-repeat [&::-webkit-slider-thumb]:h-[11px] [&::-webkit-slider-thumb]:w-[5px] [&::-webkit-slider-thumb]:appearance-none [&::-webkit-slider-thumb]:bg-[#555]"
          />
          <span className="ml-[10px] h-[9px] w-px bg-[#666]" />
          <span className="ml-[17px]">{zoom}</span>
        </div>
      </div>
    </footer>
  );
}

/* ---------- windows ---------- */

function EnglishWindow() {
  return (
    <main className="flex min-w-0 flex-[622] flex-col overflow-hidden border-r-3 border-[#24588c] bg-[#2b579a]">
      <TitleBar title="Essay about Technology  -  Word" barClass="pl-[8px]" titleClass="whitespace-pre pl-[6px]" />
      <TabStrip tabs={LEFT_TABS} fileClass="w-[52px] pl-[11px]" />
      <Ribbon>
        <ClipboardGroup className="w-[72px]" />
        <FontGroup size="16" />
        <CollapsedGroup name="Paragraph" className="w-[70px]">
          <LinesIcon lines={[[1, 15], [3, 13], [1, 15], [3, 13]]} />
        </CollapsedGroup>
        <StylesGroup />
        <EditingGroup />
      </Ribbon>
      <div className="flex min-h-0 flex-1 flex-col bg-[#e6e6e6]">
        <div className="flex h-[26px] shrink-0 items-start pt-[2px]">
          <TabSelector className="w-[13px] border-y-3 border-r-3" />
          <Ruler className="mt-[3px] mr-[21px] ml-[12px]" />
        </div>
        <div className="flex min-h-0 flex-1">
          <VerticalRuler end={16.75} className="mt-[9px] w-[7px]" />
          <div className="flex min-w-0 flex-1 flex-col">
            <EnglishPage />
            <div className="ml-[10px] flex h-[16px] shrink-0 border-t border-[#c6c6c6]">
              <ScrollButton label="Scroll left" path="M6 0v8L2 4z" />
              <span className="-ml-px h-[15px] flex-1 border border-[#8a8a8a] bg-white" />
              <span className="h-[15px] w-[8px] bg-[#d4d4d4]" />
              <ScrollButton label="Scroll right" path="M2 0v8l4-4z" />
            </div>
          </div>
          <div className="mr-[1px] mb-[19px] ml-[3px] flex w-[15px] flex-col bg-[#d9d9d9]">
            <ScrollButton label="Scroll up" path="M0 6h8L4 2z" />
            <span className="h-[105px] border border-[#8a8a8a] bg-white" />
            <span className="flex-1" />
            <ScrollButton label="Scroll down" path="M0 2h8L4 6z" />
          </div>
        </div>
      </div>
      <StatusBar page="Page 1 of 2" words="2 of 540 words" zoom="70%" pageClass="" wordsClass="ml-[20px]" viewsClass="pr-[18px]" />
    </main>
  );
}

function ArabicWindow() {
  return (
    <main className="flex min-w-0 flex-[735] flex-col overflow-hidden border-r-2 border-l border-[#1f449e] border-l-[#8fa3bd] bg-[#2b579a]">
      <TitleBar title="مقالة عن التكنولوجيا  -  Word" barClass="pl-[17px]" titleClass="whitespace-pre pl-[118px]" inactive />
      <TabStrip tabs={RIGHT_TABS} fileClass="w-[61px] pl-[20px]" />
      <Ribbon>
        <ClipboardGroup className="w-[81px]" dim />
        <FontGroup size="12" />
        <ParagraphGroup />
        <StylesGroup />
        <EditingGroup />
      </Ribbon>
      <div className="flex min-h-0 flex-1 flex-col bg-[#e6e6e6]">
        <div className="flex h-[26px] shrink-0 items-start pt-[2px]">
          <TabSelector className="w-[21px] border-3 pl-[4px]" />
          <Ruler reversed className="mt-[3px] mr-[34px] ml-[17px]" />
        </div>
        <div className="flex min-h-0 flex-1">
          <VerticalRuler end={14.25} className="mt-[10px] ml-[5px] w-[11px]" />
          <div className="flex min-w-0 flex-1 flex-col">
            <ArabicPage />
          </div>
        </div>
      </div>
      <StatusBar page="Page 1 of 2" words="458 words" language="English (United States)" zoom="80%" pageClass="ml-[7px]" wordsClass="ml-[20px]" viewsClass="pr-[20px]" />
    </main>
  );
}

function App() {
  return (
    <div className="relative flex h-screen overflow-hidden font-['Open_Sans','DejaVu_Sans',sans-serif]">
      <EnglishWindow />
      <ArabicWindow />
      <div className="pointer-events-none absolute bottom-[14px] left-[44%] flex flex-col items-center text-[#bdbdbd] opacity-40">
        <span className="font-['DejaVu_Sans',sans-serif] text-[46px] leading-[50px] font-bold">مستقل</span>
        <span className="font-['Liberation_Sans',sans-serif] text-[26px] leading-[26px] font-bold">mostaql.com</span>
      </div>
      <div className="pointer-events-none absolute right-[48px] bottom-[20px] text-[#999] opacity-70">
        <p className="text-[19px] leading-[24px]">Activate Windows</p>
        <p className="text-[14px] leading-[21px]">Go to Settings to activate Windows.</p>
      </div>
    </div>
  );
}

export default App;
